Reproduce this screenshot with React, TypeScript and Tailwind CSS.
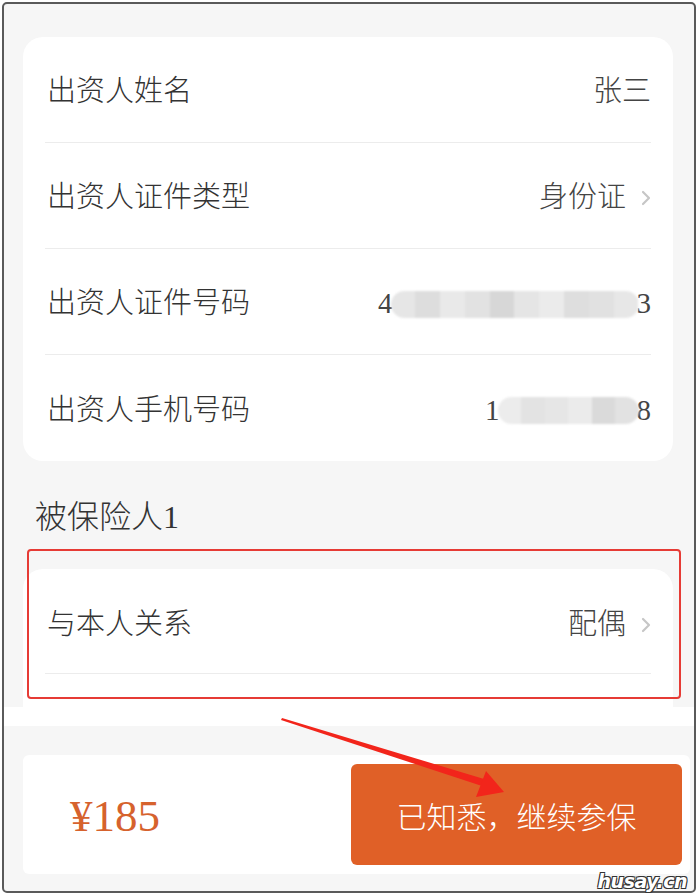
import React from 'react';

const font = { fontFamily: '"Liberation Serif", "Noto Sans CJK SC", serif' };

function Chevron() {
  return (
    <svg width="10" height="16" viewBox="0 0 10 16" className="ml-[15px] shrink-0">
      <path d="M2 2 L8 8 L2 14" fill="none" stroke="#c6c6c6" strokeWidth="2.2" strokeLinecap="round" strokeLinejoin="round" />
    </svg>
  );
}

// blurred mosaic that hides part of a number
function Mosaic({ width, blocks }: { width: number; blocks: string[] }) {
  return (
    <div className="-mx-[2px] h-[27px] rounded-full overflow-hidden flex blur-[1px]" style={{ width }}>
      {blocks.map((c, i) => (
        <div key={i} className="flex-1 h-full" style={{ backgroundColor: c }} />
      ))}
    </div>
  );
}

function Row({ label, children, last }: { label: string; children: React.ReactNode; last?: boolean }) {
  return (
    <div className={`h-[106px] flex items-center justify-between pl-[2px] pt-[5px] ${last ? '' : 'border-b border-[#ececec]'}`}>
      <span className="text-[29px] text-[#333] font-light">{label}</span>
      <div className="flex items-center text-[29px] text-[#444] font-light">{children}</div>
    </div>
  );
}

export default function App() {
  return (
    <div className="relative w-[699px] h-[896px] bg-white pt-[2px] pl-[2px] pr-[3px] pb-[3px]" style={font}>
      <div className="h-full flex flex-col bg-[#f6f6f6] border-2 border-[#5a5a5a] rounded-[5px] overflow-hidden">
        <div className="pt-[33px]">
          <div className="ml-[19px] w-[650px] bg-white rounded-[20px] px-[22px]">
            <Row label="出资人姓名">
              <span>张三</span>
            </Row>
            <Row label="出资人证件类型">
              <span>身份证</span>
              <Chevron />
            </Row>
            <Row label="出资人证件号码">
              <span>4</span>
              <Mosaic width={248} blocks={['#e6e6e6', '#dddddd', '#e9e9e9', '#e2e2e2', '#d7d7d7', '#e5e5e5', '#ebebeb', '#dedede', '#e1e1e1', '#e7e7e7']} />
              <span>3</span>
            </Row>
            <Row label="出资人手机号码" last>
              <span>1</span>
              <Mosaic width={141} blocks={['#ececec', '#e3e3e3', '#e6e6e6', '#ebebeb', '#dadada', '#e2e2e2']} />
              <span>8</span>
            </Row>
          </div>

          <div className="h-[108px] flex items-center pl-[31px] pt-[4px]">
            <span className="text-[32px] text-[#333] font-light">被保险人1</span>
          </div>

          <div className="ml-[19px] w-[650px] h-[138px] bg-white rounded-t-[20px] px-[22px]">
            <div className="h-[105px] flex items-center justify-between pl-[2px] pt-[8px] border-b border-[#ececec]">
              <span className="text-[29px] text-[#333] font-light">与本人关系</span>
              <div className="flex items-center text-[29px] text-[#444] font-light">
                <span>配偶</span>
                <Chevron />
              </div>
            </div>
          </div>
        </div>

        <div className="h-[19px] bg-white" />
        <div className="h-[29px]" />
        <div className="ml-[19px] w-[667px] h-[119px] bg-white rounded-[6px] flex items-center pt-[4px]">
          <span className="pl-[47px] text-[45px] text-[#d6622d] leading-none">¥185</span>
          <button className="ml-auto mr-[8px] -mt-[4px] w-[331px] h-[101px] rounded-[6px] bg-[#e06027] text-white text-[30px] font-light pt-[5px]">
            已知悉，继续参保
          </button>
        </div>
      </div>

      {/* red highlight box */}
      <div className="absolute left-[27px] top-[549px] w-[654px] h-[150px] border-2 border-[#e63b35] rounded-[4px] pointer-events-none" />

      {/* red arrow */}
      <svg className="absolute left-0 top-0 pointer-events-none" width="699" height="896">
        <polygon points="282,718 484,779 482,786 281,720" fill="#f2251b" />
        <polygon points="504,792 476,797 486,771" fill="#f2251b" />
      </svg>

      <span
        className="absolute right-[12px] bottom-[5px] text-[19px] font-bold italic text-white leading-none tracking-tight [text-shadow:1px_1px_0_#333,-1px_-1px_0_#333,1px_-1px_0_#333,-1px_1px_0_#333]"
        style={{ fontFamily: '"DejaVu Sans", sans-serif' }}
      >
        husay.cn
      </span>
    </div>
  );
}
